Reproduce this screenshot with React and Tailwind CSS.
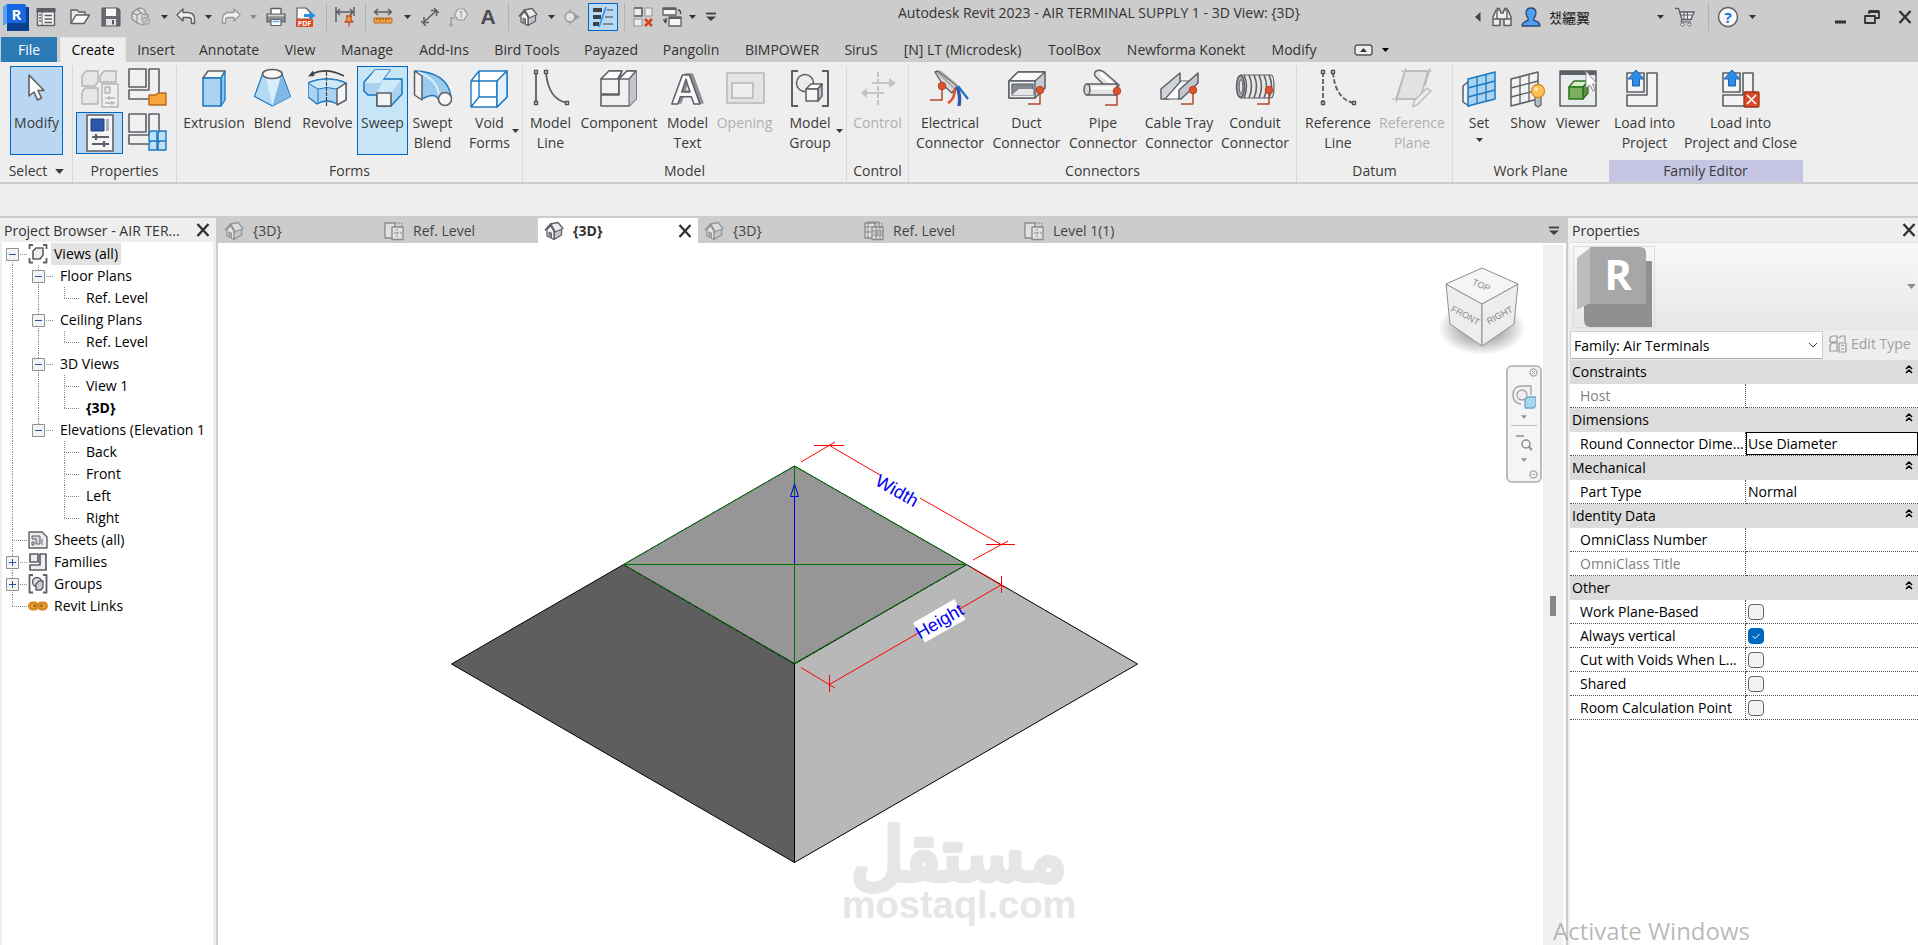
import React, { useState } from "react";
import clsx from "clsx";

const G = "#5c5f66";
const B = "#1a78c2";

const Svg = ({ w = 40, h = w, className, children }) => (
  <svg
    width={w}
    height={h}
    viewBox={`0 0 ${w} ${h}`}
    fill="none"
    strokeLinejoin="round"
    className={clsx("shrink-0", className)}
    aria-hidden="true"
  >
    {children}
  </svg>
);

const Caret = ({ className }) => (
  <svg width="7" height="4" viewBox="0 0 7 4" className={clsx("shrink-0", className)} aria-hidden="true">
    <path d="M0 0H7L3.5 4Z" fill="currentColor" />
  </svg>
);

const CloseIcon = () => (
  <Svg w={14}>
    <path d="M1.5 1L12.5 13M12.5 1L1.5 13" stroke="#333" strokeWidth="2.4" />
  </Svg>
);

/* ---------- quick access icons (20px) ---------- */

const RevitLogo = () => (
  <Svg w={28}>
    <path d="M5 4H27V28H5Z" fill="#0b3f8f" />
    <path d="M1 4L5 1V20L1 23Z" fill="#5aa0f5" />
    <path d="M5 1H22Q24 1 24 3V20H5Z" fill="#1667e0" />
    <text x="14.5" y="16.5" textAnchor="middle" fontSize="15" fontWeight="700" fontFamily="Open Sans, sans-serif" fill="#fff">
      R
    </text>
  </Svg>
);

const PropertiesPalette = () => (
  <Svg w={20}>
    <path d="M1.5 2H18.5V18.5H1.5Z" fill="#f4f4f4" stroke={G} strokeWidth="1.4" />
    <path d="M1 1.5H19V5H1ZM6 5V18" fill={G} stroke={G} />
    <path d="M3 8H5M3 11H5M3 14H5M8.5 8.5H16M8.5 12H16M8.5 15.5H16" stroke={G} strokeWidth="1.6" />
  </Svg>
);

const Open = () => (
  <Svg w={20}>
    <path d="M1 16V3H7L9 5H15V8" fill="#e8e8e8" stroke={G} strokeWidth="1.4" />
    <path d="M1 16.5L6 8H19.5L14 16.5Z" fill="#fafafa" stroke={G} strokeWidth="1.4" />
  </Svg>
);

const Save = () => (
  <Svg w={20}>
    <path d="M1 1H17L19 3V19H1Z" fill="#686b72" stroke="#54575c" />
    <path d="M5 1.5H15V9H5Z" fill="#f7f7f7" />
    <path d="M5 12H15V18.5H5Z" fill="#e4e4e4" />
    <path d="M11 13H13V17.5H11Z" fill="#54575c" />
  </Svg>
);

const Sync = () => (
  <Svg w={20}>
    <path d="M6 2L10 1L14 3V6L17 8V14L12 18L6 16L1 12V6Z" fill="#dcdcdc" stroke="#8f9195" strokeWidth="1.3" />
    <path d="M1 6L6 8L10 6L14 8L17 7M6 8V16M11 8V13M6 2L10 6" stroke="#8f9195" strokeWidth="1.2" />
    <circle cx="15" cy="14" r="4.5" fill="#aeb0b3" />
    <path d="M12.5 14L15 12M17.5 14L15 16" stroke="#eee" />
  </Svg>
);

const UndoArrow = ({ redo, color }) => (
  <Svg w={20}>
    <g transform={redo ? "translate(20 0) scale(-1 1)" : undefined}>
      <path
        d="M1 8L7 2V5.5H12Q18.500 6 18.500 12V16.500H15.500V13Q15.500 10.500 12 10.500H7V14Z"
        fill="#f1f1f1"
        stroke={color}
        strokeWidth="1.4"
      />
    </g>
  </Svg>
);

const Print = () => (
  <Svg w={20}>
    <path d="M5 7V1.500H15V7" fill="#fff" stroke={G} strokeWidth="1.4" />
    <path d="M1 7H19V15H1Z" fill="#8d9095" stroke={G} strokeWidth="1.2" />
    <path d="M2 8.500H18" stroke="#d8d8d8" strokeWidth="1.500" />
    <path d="M5 12.500H15V18.500H5Z" fill="#fff" stroke={G} strokeWidth="1.2" />
    <path d="M6.500 14.500H13.500" stroke="#5fa9e0" strokeWidth="1.400" />
  </Svg>
);

const Pdf = () => (
  <Svg w={20}>
    <path d="M1 1H10L14 5V12H1Z" fill="#fafafa" stroke={G} strokeWidth="1.2" />
    <path d="M8 7H14V4L19.500 8.500L14 13V10H8Z" fill="#2b8de3" />
    <path d="M0 12H17V20H0Z" fill="#dd4b22" />
    <text x="8.500" y="18.500" textAnchor="middle" fontSize="7" fontWeight="700" fontFamily="Open Sans, sans-serif" fill="#fff">
      PDF
    </text>
  </Svg>
);

const AlignPin = () => (
  <Svg w={20}>
    <path d="M1 0V15M19 0V9M2 5H18M5 2L2 5L5 8M15 2L18 5L15 8" stroke={G} strokeWidth="1.5" />
    <path d="M11 9H17M12 9V13L10 15H18L16 13V9M14 15V19.500" fill="#f4a04a" stroke="#b9552b" strokeWidth="1.300" />
  </Svg>
);

const Measure = () => (
  <Svg w={20}>
    <path d="M1.500 5H18.500M5 2L1.500 5L5 8M15 2L18.500 5L15 8" stroke={G} strokeWidth="1.600" />
    <path d="M1 11H19V16H1Z" fill="#f2a243" stroke="#b8702a" strokeWidth="1" />
    <path d="M4 11V13M7 11V14M10 11V13M13 11V14M16 11V13" stroke="#8a4f17" />
  </Svg>
);

const AlignedDimension = () => (
  <Svg w={20}>
    <path d="M4 15L16 4M4 10V15.500H9M11 3.500H16.500V9" stroke={G} strokeWidth="1.600" />
    <path d="M1 14L6 19M14 1L19 6" stroke={G} strokeWidth="1.300" />
  </Svg>
);

const Tag = () => (
  <Svg w={20}>
    <path d="M2 18V11H6" stroke="#96999d" strokeWidth="1.300" />
    <circle cx="2" cy="18" r="1.200" stroke="#96999d" />
    <path d="M9 2H15L18.500 7.500L15 13H9L5.500 7.500Z" fill="#e6e6e6" stroke="#96999d" strokeWidth="1.200" />
    <text x="12" y="11" textAnchor="middle" fontSize="9" fontFamily="Open Sans, sans-serif" fill="#85888c">
      1
    </text>
  </Svg>
);

const TextA = () => (
  <Svg w={20}>
    <text x="10" y="17" textAnchor="middle" fontSize="21" fontWeight="700" fontFamily="Liberation Sans, sans-serif" fill="#494c51">
      A
    </text>
  </Svg>
);

const House = ({ faded }) => (
  <Svg w={20} className={faded ? "opacity-50" : undefined}>
    <path d="M10 10L17.500 7V14L10 18.500Z" fill="#c3c6ca" stroke={G} strokeWidth="1.300" />
    <path d="M3 8.500L6.500 4.500L10 10V18.500L3 15Z" fill="#f7f7f7" stroke={G} strokeWidth="1.300" />
    <path d="M5 16V11L7.500 12V17" fill="#8f9297" stroke={G} />
    <path d="M6.500 3L14 1.500L19 7.500L11 11Z" fill="#ededed" stroke={G} strokeWidth="1.300" />
    <path d="M1 9.500L6.500 3L11 11" stroke={G} strokeWidth="1.600" />
  </Svg>
);

const Section = () => (
  <Svg w={16}>
    <path d="M8 3L16 8L8 13Z" fill="#9c9ea1" />
    <circle cx="6" cy="8" r="5" fill="#e2e2e2" stroke="#96999d" strokeWidth="1.400" />
    <path d="M6 0V3M6 13V16" stroke="#96999d" />
  </Svg>
);

const ThinLines = () => (
  <Svg w={24}>
    <path d="M2 5H11M2 12H10M2 19H8" stroke="#3c4048" strokeWidth="4" />
    <path d="M16 5H22M14 12H22M12 19H22" stroke="#3c4048" strokeWidth="1.200" />
    <path d="M15 2L8 22" stroke="#3b96ee" strokeWidth="1.800" />
  </Svg>
);

const CloseInactive = () => (
  <Svg w={20}>
    <path d="M1 1H9V9H1ZM12 1H19V9H12ZM1 12H9V19H1Z" fill="#ececec" stroke="#96999d" strokeWidth="1.200" />
    <path d="M1 1H9V9H1" stroke={G} strokeWidth="1.500" />
    <path d="M12 12L19 19M19 12L12 19" stroke="#d8431f" strokeWidth="2.600" />
  </Svg>
);

const SwitchWindows = () => (
  <Svg w={20}>
    <path d="M1 1H14V8H1ZM7 10H19V19H7Z" fill="#f6f6f6" stroke={G} strokeWidth="1.300" />
    <path d="M1 2H14M7 11H19" stroke={G} strokeWidth="2.200" />
    <path d="M16 3Q19 3 18.500 7M4 11V15M1.500 12.500L4 16" stroke="#3c4048" strokeWidth="1.400" />
  </Svg>
);

const Customize = () => (
  <Svg w={12}>
    <path d="M1 2.500H11" stroke="#3c4048" strokeWidth="1.800" />
    <path d="M1 5.500H11L6 10Z" fill="#3c4048" />
  </Svg>
);

const Binoculars = () => (
  <Svg w={20}>
    <path
      d="M1 10L4 3H8L9 6H11L12 3H16L19 10V18.500H12V12H8V18.500H1Z"
      fill="#ededed"
      stroke={G}
      strokeWidth="1.500"
    />
    <path d="M4.500 1.500H8M12 1.500H15.500M1 12H8M12 12H19M5 4V12M15 4V12" stroke={G} strokeWidth="1.400" />
  </Svg>
);

const UserIcon = () => (
  <Svg w={20}>
    <path d="M1 19Q1 15 7 13.500V11Q5 9 5 5.500Q5.500 1 10 1Q14.500 1 15 5.500Q15 9 13 11V13.500Q19 15 19 19Z" fill="#4f9df0" stroke="#2f4a73" strokeWidth="1.300" />
  </Svg>
);

const Cart = () => (
  <Svg w={20}>
    <path d="M0 1.500H3.500L7 12.500H16L19 5H5" fill="#f1f1f1" stroke={G} strokeWidth="1.400" />
    <path d="M6 8H18M9 5V12M12.500 5V12M7 12.500L6 15H16" stroke={G} strokeWidth="1.100" />
    <circle cx="7.500" cy="17.500" r="1.600" fill="#fff" stroke={G} />
    <circle cx="14.500" cy="17.500" r="1.600" fill="#fff" stroke={G} />
  </Svg>
);

const Help = () => (
  <Svg w={22}>
    <circle cx="11" cy="11" r="9.500" fill="#f7f7f7" stroke={G} strokeWidth="1.500" />
    <text x="11" y="16.500" textAnchor="middle" fontSize="15" fontWeight="700" fontFamily="Open Sans, sans-serif" fill="#1b74d1">
      ?
    </text>
  </Svg>
);

/* ---------- ribbon icons (40px) ---------- */

const Cursor = () => (
  <Svg>
    <path d="M12 7V28L17 24L20.500 32L24.500 30L21 22.500H27Z" fill="#fdfdfd" stroke={G} strokeWidth="1.600" />
  </Svg>
);

const Extrusion = () => (
  <Svg>
    <path d="M9 10L14 3H31L27 10Z" fill="#f6f6f6" stroke={G} strokeWidth="1.500" />
    <path d="M27 10L31 3V32L27 38Z" fill="#8fc3e8" stroke={B} strokeWidth="1.300" />
    <path d="M9 10H27V38H9Z" fill="#a9d3f0" stroke={B} strokeWidth="1.500" />
  </Svg>
);

const Blend = () => (
  <Svg>
    <path d="M9.500 6L1.500 28.500L19.500 38L37.500 28.500L29 6Z" fill="#b3daf3" stroke={B} strokeWidth="1.200" />
    <path d="M13 10L19.500 38L28 9Z" fill="#d9eefb" />
    <path d="M28 8L19.500 38L37.500 28.500Z" fill="#7fb8e2" />
    <ellipse cx="19.300" cy="6" rx="9.800" ry="4.500" fill="#f7f7f7" stroke={G} strokeWidth="1.600" />
  </Svg>
);

const Revolve = () => (
  <Svg>
    <path d="M0 15Q8 11 19 11Q30 11 38 15V32L29 36Q24 33 19 33Q14 33 9 36L0 29Z" fill="#a9d3f0" stroke={B} strokeWidth="1.300" />
    <path d="M0 15L10 21Q19 18 28 21L38 15Q19 7 0 15Z" fill="#cfe8f8" stroke={B} />
    <path d="M10 21V36" stroke={B} />
    <path d="M29 21L38 15V32L29 37Z" fill="#f6f6f6" stroke={G} strokeWidth="1.500" />
    <path d="M4 6Q18 -1 36 8" stroke="#3f4247" strokeWidth="1.800" />
    <path d="M0 8.500L5 2.500L6.500 8Z" fill="#3f4247" />
    <path d="M18.500 4V38" stroke="#3f4247" strokeWidth="1.200" strokeDasharray="4 1" />
  </Svg>
);

const Sweep = () => (
  <Svg>
    <path d="M12 2H27L20 11H39V26L28 38H14V27H5L1 23V14Z" fill="#a9d3f0" stroke={B} strokeWidth="1.500" />
    <path d="M12 2H27L17 15H2Z" fill="#d6edfa" />
    <path d="M20 12H38L28 25H14Z" fill="#cde8f9" />
    <path d="M14 25H28V38H14Z" fill="#f4f4f4" stroke={G} strokeWidth="1.600" />
  </Svg>
);

const SweptBlend = () => (
  <Svg>
    <path d="M2 3Q34 4 38 28L25 31Q22 24 9 31Z" fill="#9bcbec" stroke={B} strokeWidth="1.300" />
    <path d="M5 4Q26 12 26 29" stroke="#d6edfa" strokeWidth="2" />
    <path d="M1.500 3L9 8V32L1.500 27Z" fill="#f2f2f2" stroke={G} strokeWidth="1.500" />
    <circle cx="32" cy="31" r="6.500" fill="#f7f7f7" stroke={G} strokeWidth="1.500" />
  </Svg>
);

const VoidForms = () => (
  <Svg>
    <path d="M1 13H27V39H1ZM1 13L9 3H37L27 13M37 3V29L27 39M9 3V29M9 29H37M9 29L1 39" fill="#fff" stroke={B} strokeWidth="1.400" />
    <path d="M27 13L37 3V29L27 39Z" fill="#e2f1fb" stroke={B} strokeWidth="1.400" />
  </Svg>
);

const EndBoxes = ({ pts }) =>
  pts.map(([x, y]) => <rect key={`${x}-${y}`} x={x - 1.5} y={y - 1.5} width="3" height="3" fill="#eee" stroke="#4d5056" strokeWidth="1.400" />);

const ModelLine = ({ dashed }) => (
  <Svg>
    <path d="M5 4V35M15 4Q17 31 36 35" stroke={G} strokeWidth="1.800" strokeDasharray={dashed ? "5 2" : undefined} />
    <EndBoxes pts={[[5, 4], [5, 35], [15, 4], [36, 35]]} />
  </Svg>
);

const Component = () => (
  <Svg>
    <path d="M2 11L10 3H23L20 11V26H2Z" fill="#f2f2f2" stroke={G} strokeWidth="1.500" />
    <path d="M2 27H20V11L28 3H37V31L30 38H2Z" fill="#f0f0f0" stroke={G} strokeWidth="1.600" />
    <path d="M30 11L37 3V31L30 38Z" fill="#c2c5c9" />
    <path d="M20 11H30L37 3H28ZM2 11L10 3H23L19 10V11Z" fill="#fff" stroke={G} strokeWidth="1.300" />
    <path d="M30 11V38" stroke={G} />
  </Svg>
);

const ModelText = () => (
  <Svg className="drop-shadow-[3px_-1px_0_#8d9096]">
    <text
      x="18"
      y="36"
      textAnchor="middle"
      fontSize="42"
      fontWeight="700"
      fontFamily="Liberation Sans, sans-serif"
      fill="#fafafa"
      stroke={G}
      strokeWidth="1.500"
    >
      A
    </text>
  </Svg>
);

const Opening = () => (
  <Svg>
    <path d="M2 5H39V35H2Z" fill="#e4e4e4" stroke="#b7b7b7" strokeWidth="1.600" />
    <path d="M7 15H28V30H7Z" fill="#efefef" stroke="#b7b7b7" strokeWidth="1.600" />
  </Svg>
);

const ModelGroup = () => (
  <Svg>
    <path d="M8 3H2V38H8M32 3H38V38H32" stroke={G} strokeWidth="2" />
    <circle cx="15" cy="15" r="8.500" fill="#ececec" stroke={G} strokeWidth="1.500" />
    <path d="M16 21L21 16H32L28 21Z" fill="#fff" stroke={G} strokeWidth="1.500" />
    <path d="M28 21L32 16V28L28 33Z" fill="#c2c5c9" stroke={G} strokeWidth="1.500" />
    <path d="M16 21H28V33H16Z" fill="#f4f4f4" stroke={G} strokeWidth="1.500" />
  </Svg>
);

const Control = () => (
  <Svg>
    <path d="M20 4V38" stroke="#b7b7b7" strokeWidth="1.600" strokeDasharray="5 2" />
    <path d="M14 15H33M6 25H26" stroke="#c4c4c4" strokeWidth="2" />
    <path d="M31 10L38 15L31 20ZM9 20L3 25L9 30Z" fill="#c4c4c4" />
  </Svg>
);

const Lead = ({ x, y }) => (
  <>
    <path d={`M${x} ${y}V${y + 14}H${x - 12}`} stroke="#b04a2c" strokeWidth="1.500" />
    <circle cx={x} cy={y} r="3.800" fill="#e0532f" stroke="#a33a1b" strokeWidth=".8" />
  </>
);

const Electrical = () => (
  <Svg>
    <path d="M8 3L27 18L22 25L13 17L5 4Z" fill="#d8d8d8" stroke={G} strokeWidth="1.400" />
    <path d="M10 3L27 17M7 4L24 20" stroke="#9da0a5" strokeWidth="1.500" />
    <path d="M25 20Q25 31 18 35" stroke="#e0532f" strokeWidth="2.600" />
    <path d="M27 19Q31 28 29 38" stroke="#3457b1" strokeWidth="3.400" />
    <path d="M28 18L38 31" stroke="#1b74c8" strokeWidth="2.200" />
    <Lead x={12} y={18} />
  </Svg>
);

const Duct = () => (
  <Svg>
    <path d="M2 13L11 4H38V20L28 30H2Z" fill="#c9ccd0" stroke={G} strokeWidth="1.500" />
    <path d="M2 13L11 4H38L28 13Z" fill="#fbfbfb" stroke={G} strokeWidth="1.300" />
    <path d="M2 13H28V30H2Z" fill="#f2f2f2" stroke={G} strokeWidth="1.500" />
    <path d="M5 16H26V27H5Z" fill="#85898f" stroke={G} strokeWidth="1.200" />
    <path d="M5 27L12 21H26V27Z" fill="#e6e6e6" />
    <Lead x={33} y={22} />
  </Svg>
);

const Pipe = () => (
  <Svg>
    <path d="M13 3Q17 1 21 4L36 17L32 27L24 20L13 9Q10 6 13 3Z" fill="#e4e4e4" stroke={G} strokeWidth="1.500" />
    <path d="M17 5L34 20" stroke="#fff" strokeWidth="3" />
    <path d="M4 16H34V27H4Z" fill="#e4e4e4" stroke={G} strokeWidth="1.400" />
    <path d="M6 20H32" stroke="#fff" strokeWidth="3" />
    <ellipse cx="4" cy="21.500" rx="3" ry="5.500" fill="#d0d3d7" stroke={G} strokeWidth="1.500" />
    <Lead x={34} y={23} />
  </Svg>
);

const CableTray = () => (
  <Svg>
    <path d="M2 21L21 5V15L10 31H2Z" fill="#d0d3d7" stroke={G} strokeWidth="1.500" />
    <path d="M6 31L22 13H32L20 31Z" fill="#fafafa" stroke={G} strokeWidth="1.200" />
    <path d="M20 22L39 5V15L22 31H20Z" fill="#c3c6cb" stroke={G} strokeWidth="1.500" />
    <Lead x={34} y={22} />
  </Svg>
);

const Conduit = () => (
  <Svg>
    <path d="M5 7H36Q39 7 39 18Q39 30 36 30H5" fill="#e6e6e6" stroke={G} strokeWidth="1.200" />
    {[9, 14, 19, 24, 29, 34].map((x) => (
      <path key={x} d={`M${x} 7Q${x + 5} 18 ${x} 30`} stroke={G} strokeWidth="1.600" />
    ))}
    <ellipse cx="5.500" cy="18.500" rx="4" ry="11" fill="#a8abb0" stroke={G} strokeWidth="1.500" />
    <ellipse cx="6" cy="18.500" rx="1.800" ry="7" fill="#e6e6e6" stroke={G} />
    <Lead x={34} y={22} />
  </Svg>
);

const ReferencePlane = () => (
  <Svg>
    <path d="M13 3H36L28 31H4Z" fill="#e2e2e2" stroke="#b7b7b7" strokeWidth="1.400" />
    <path d="M9 3H40M14 0L4 34M0 31H25M38 0L33 18" stroke="#b7b7b7" strokeWidth="1.200" />
    <path d="M35 20L39 23L26 36L21 39L22 33Z" fill="#ececec" stroke="#b7b7b7" strokeWidth="1.400" />
  </Svg>
);

const SetPlane = () => (
  <Svg>
    <path d="M4 18L10 13V38L4 34Z" fill="#f2f2f2" stroke={G} strokeWidth="1.500" />
    <path d="M9 11L36 4V31L9 38Z" fill="#a9d3f0" stroke={B} strokeWidth="1.500" />
    <path d="M18 9V36M27 6V33M9 20L36 13M9 29L36 22" stroke={B} strokeWidth="1.300" />
  </Svg>
);

const ShowPlane = () => (
  <Svg>
    <path d="M3 11L30 4V31L3 38Z" fill="#f2f2f2" stroke={G} strokeWidth="1.500" />
    <path d="M12 9V36M21 6V33M3 20L30 13M3 29L30 22" stroke={G} strokeWidth="1.300" />
    <path d="M27 29H33V37L30 39L27 37Z" fill="#b8bbbf" stroke={G} strokeWidth="1.200" />
    <circle cx="30" cy="23" r="6.500" fill="#ffc053" stroke="#dc8a24" strokeWidth="1.300" />
    <circle cx="28" cy="21" r="2" fill="#ffe9be" />
  </Svg>
);

const Viewer = () => (
  <Svg>
    <path d="M2 3H38V38H2Z" fill="#e9ebed" stroke={G} strokeWidth="1.500" />
    <path d="M2 3H38V7H2Z" fill={G} />
    <path d="M11 19L16 13H30L25 19Z" fill="#d9ebcf" stroke="#357024" strokeWidth="1.300" />
    <path d="M25 19L30 13V25L25 31Z" fill="#5c8f45" stroke="#357024" strokeWidth="1.300" />
    <path d="M11 19H25V31H11Z" fill="#7fae62" stroke="#277a1b" strokeWidth="1.600" />
    <path d="M28 3V20L32 17L35 23L37 22L34.500 16H39Z" fill="#fff" stroke="#888b90" />
  </Svg>
);

const LoadProject = ({ close }) => (
  <Svg>
    <path d="M22 5H32V38H2V27H22Z" fill="#f4f4f4" stroke={G} strokeWidth="1.600" />
    <path d="M2 5H19V24H2Z" fill="#f4f4f4" stroke={G} strokeWidth="1.600" />
    <path d="M11 2L19 11H14.500V18H7.500V11H3Z" fill="#2f8de4" stroke="#1a62b8" />
    {close && (
      <>
        <rect x="23" y="24" width="15" height="15" rx="1" fill="#da4b25" stroke="#9d3216" strokeWidth="1.300" />
        <path d="M26 27L35 36M35 27L26 36" stroke="#fff" strokeWidth="1.600" />
      </>
    )}
  </Svg>
);

const FamilyTypes = () => (
  <Svg>
    <g fill="#e6e6e6" stroke="#b4b4b4" strokeWidth="1.400">
      <path d="M2 8L6 3H18V14L15 18H2ZM20 8L24 3H36V14H20ZM2 24L5 20H18V36H2Z" />
      <path d="M22 16H38V39H22Z" fill="#f0f0f0" />
      <path d="M25 19H30V25H25ZM25 30H35M25 35H35M29 28V32M32 33V37" />
    </g>
  </Svg>
);

const PropertiesBig = () => (
  <Svg>
    <path d="M7 2H33V38H7Z" fill="#f5f5f5" stroke={G} strokeWidth="1.600" />
    <path d="M11 6H24V18H11Z" fill="#2f57a8" stroke="#1d3f85" />
    <path d="M26 6H29V18H26Z" fill="#aeb1b5" />
    <path d="M12 24H29M12 31H29" stroke={G} strokeWidth="1.800" />
    <path d="M16 21V27M24 28V34" stroke={G} strokeWidth="2.200" />
  </Svg>
);

const FamilyBlocks = ({ folder }) => (
  <Svg>
    <path d="M2 1H19V19H2ZM22 1H32V31H2V22H22Z" fill="#f0f0f0" stroke={G} strokeWidth="1.600" />
    {folder ? (
      <path d="M22 27H29L31 25H39V37H22Z" fill="#f7a63f" stroke="#b76a1e" strokeWidth="1.400" />
    ) : (
      <path d="M22 20L24 18H30V28H22ZM31 20L33 18H39V28H31ZM22 30L24 28H30V37H22ZM31 30L33 28H39V37H31Z" fill="#bfe0f5" stroke={B} strokeWidth="1.400" />
    )}
  </Svg>
);

/* ---------- title bar ---------- */

const QUICK_ACCESS = [
  { label: "Revit", icon: <RevitLogo />, w: "w-8" },
  { label: "Palette", icon: <PropertiesPalette />, w: "w-7 mr-1" },
  { label: "Open", icon: <Open />, w: "w-8" },
  { label: "Save", icon: <Save />, w: "w-[30px]" },
  { label: "Sync", icon: <Sync />, w: "w-[30px]" },
  { label: "Sync menu", icon: <Caret />, w: "w-4" },
  { label: "Undo", icon: <UndoArrow color={G} />, w: "w-7" },
  { label: "Undo menu", icon: <Caret />, w: "w-4" },
  { label: "Redo", icon: <UndoArrow redo color="#96999d" />, w: "w-[30px]" },
  { label: "Redo menu", icon: <Caret className="text-[#8a8a8a]" />, w: "w-[14px]" },
  { label: "Print", icon: <Print />, w: "w-8" },
  { label: "Export PDF", icon: <Pdf />, w: "w-7" },
  { sep: true, w: "w-3" },
  { label: "Pin dimension", icon: <AlignPin />, w: "w-[26px]" },
  { sep: true, w: "w-[14px]" },
  { label: "Measure", icon: <Measure />, w: "w-[22px]" },
  { label: "Measure menu", icon: <Caret />, w: "w-[26px]" },
  { label: "Aligned dimension", icon: <AlignedDimension />, w: "w-5" },
  { label: "Tag", icon: <Tag />, w: "w-[38px]" },
  { label: "Text", icon: <TextA />, w: "w-5" },
  { sep: true, w: "w-5" },
  { label: "Default 3D view", icon: <House />, w: "w-5" },
  { label: "3D view menu", icon: <Caret />, w: "w-[26px]" },
  { label: "Section", icon: <Section />, w: "w-4" },
  { label: "Thin lines", icon: <ThinLines />, w: "w-[30px] ml-2 border border-[#0067c0] bg-[#b9d9f3]" },
  { sep: true, w: "w-3" },
  { label: "Close inactive views", icon: <CloseInactive />, w: "w-[26px]" },
  { label: "Switch windows", icon: <SwitchWindows />, w: "w-8" },
  { label: "Windows menu", icon: <Caret />, w: "w-2" },
  { label: "Customize", icon: <Customize />, w: "w-[30px]" },
];

const BarItem = ({ item }) =>
  item.sep ? (
    <div className={clsx("flex justify-center shrink-0", item.w)}>
      <div className="w-px h-7 bg-[#b3b3b3]" />
    </div>
  ) : (
    <button type="button" aria-label={item.label} className={clsx("flex h-7 items-center justify-center shrink-0", item.w)}>
      {item.icon}
    </button>
  );

const TitleBar = () => (
  <header className="flex items-center h-[37px] pb-1 bg-[#ccc] text-[#333]">
    <div className="flex items-center">
      {QUICK_ACCESS.map((item, i) => (
        <BarItem key={i} item={item} />
      ))}
    </div>
    <h1 className="flex-1 pb-2 text-center text-sm whitespace-nowrap">
      Autodesk Revit 2023 - AIR TERMINAL SUPPLY 1 - 3D View: {"{3D}"}
    </h1>
    <div className="flex items-center w-[446px] shrink-0">
      <button type="button" aria-label="Collapse search" className="w-3 flex justify-center">
        <Svg w={6} h={10}>
          <path d="M5.500 0V10L0 5Z" fill="#444" />
        </Svg>
      </button>
      <BarItem item={{ label: "Search", icon: <Binoculars />, w: "w-9" }} />
      <button type="button" className="flex items-center gap-2 ml-px text-[#222]">
        <UserIcon />
        <span className="w-[115px] text-left text-sm font-['Noto_Sans_CJK_KR',sans-serif]">챘纚翼</span>
      </button>
      <div className="flex items-center">
        <BarItem item={{ label: "Account menu", icon: <Caret />, w: "w-2 -ml-2" }} />
        <BarItem item={{ label: "App store", icon: <Cart />, w: "w-[42px]" }} />
        <BarItem item={{ sep: true, w: "w-1" }} />
        <BarItem item={{ label: "Help", icon: <Help />, w: "w-9" }} />
        <BarItem item={{ label: "Help menu", icon: <Caret />, w: "w-3" }} />
      </div>
      <div className="flex flex-1 items-center justify-end gap-2">
        <button type="button" aria-label="Minimize" className="px-1">
          <Svg w={14}>
            <path d="M1 12H12" stroke="#333" strokeWidth="3" />
          </Svg>
        </button>
        <button type="button" aria-label="Restore" className="px-1">
          <Svg w={16} h={14}>
            <path d="M5 4V1.500H15V8H11" stroke="#333" strokeWidth="1.800" />
            <path d="M5 1.500H15" stroke="#333" strokeWidth="3" />
            <path d="M1 6H11V13H1Z" stroke="#333" strokeWidth="1.800" />
          </Svg>
        </button>
        <button type="button" aria-label="Close" className="px-[6px]">
          <CloseIcon />
        </button>
      </div>
    </div>
  </header>
);

/* ---------- ribbon ---------- */

const RIBBON_TABS = [
  ["Insert", "w-[60px]"],
  ["Annotate", "w-[86px]"],
  ["View", "w-[56px]"],
  ["Manage", "w-[78px]"],
  ["Add-Ins", "w-[76px]"],
  ["Bird Tools", "w-[90px]"],
  ["Payazed", "w-[78px]"],
  ["Pangolin", "w-[82px]"],
  ["BIMPOWER", "w-[100px]"],
  ["SiruS", "w-[58px]"],
  ["[N] LT (Microdesk)", "w-[145px]"],
  ["ToolBox", "w-[79px]"],
  ["Newforma Konekt", "w-[144px]"],
  ["Modify", "w-[72px]"],
];

const RibbonTabs = () => (
  <nav className="flex items-center h-[25px] pl-px bg-[#ccc] text-sm text-[#333]">
    <button type="button" className="w-14 h-full bg-[#2b7ab5] text-white">
      File
    </button>
    <button type="button" className="w-[66px] h-full ml-[3px] border border-b-0 border-[#e4e4e4] bg-[#eee] text-black">
      Create
    </button>
    {RIBBON_TABS.map(([name, w]) => (
      <button type="button" key={name} className={clsx("h-full whitespace-nowrap", w)}>
        {name}
      </button>
    ))}
    <button type="button" aria-label="Minimize ribbon" className="flex items-center gap-2 ml-6">
      <Svg w={20} h={12}>
        <rect x="1" y="1" width="17" height="10" rx="2.500" fill="#eee" stroke="#555" strokeWidth="1.400" />
        <path d="M6 8L9.500 4L13 8Z" fill="#333" />
      </Svg>
      <Caret className="text-black" />
    </button>
  </nav>
);

const RibbonButton = ({ label, icon, w, disabled, menu, below, active }) => (
  <button
    type="button"
    disabled={disabled}
    className={clsx(
      "relative flex flex-col items-center h-[89px] border whitespace-nowrap leading-5",
      w,
      active || "border-transparent",
      disabled && "text-[#b0b0b0]"
    )}
  >
    <span className="pt-px pb-[5px]">{icon}</span>
    {label.split("|").map((line) => (
      <span key={line}>{line}</span>
    ))}
    {menu && <Caret className="absolute right-[2px] bottom-[21px]" />}
    {below && <Caret className="mt-[5px]" />}
  </button>
);

const PANELS = [
  {
    title: "Forms",
    w: "w-[346px] pl-1",
    tools: [
      { label: "Extrusion", icon: <Extrusion />, w: "w-[66px]" },
      { label: "Blend", icon: <Blend />, w: "w-[51px]" },
      { label: "Revolve", icon: <Revolve />, w: "w-[59px]" },
      { label: "Sweep", icon: <Sweep />, w: "w-[51px]", active: "border-[#0067c0] bg-[#c6e6f8]" },
      { label: "Swept|Blend", icon: <SweptBlend />, w: "w-[49px]" },
      { label: "Void|Forms", icon: <VoidForms />, w: "w-[65px]", menu: true },
    ],
  },
  {
    title: "Model",
    w: "w-[324px]",
    tools: [
      { label: "Model|Line", icon: <ModelLine />, w: "w-[55px]" },
      { label: "Component", icon: <Component />, w: "w-[82px]" },
      { label: "Model|Text", icon: <ModelText />, w: "w-[55px]" },
      { label: "Opening", icon: <Opening />, w: "w-[59px]", disabled: true },
      { label: "Model|Group", icon: <ModelGroup />, w: "w-[72px]", menu: true },
    ],
  },
  {
    title: "Control",
    w: "w-[62px]",
    tools: [{ label: "Control", icon: <Control />, w: "w-[61px]", disabled: true }],
  },
  {
    title: "Connectors",
    w: "w-[388px] pl-[3px]",
    tools: [
      { label: "Electrical|Connector", icon: <Electrical />, w: "w-[76px]" },
      { label: "Duct|Connector", icon: <Duct />, w: "w-[77px]" },
      { label: "Pipe|Connector", icon: <Pipe />, w: "w-[76px]" },
      { label: "Cable Tray|Connector", icon: <CableTray />, w: "w-[76px]" },
      { label: "Conduit|Connector", icon: <Conduit />, w: "w-[76px]" },
    ],
  },
  {
    title: "Datum",
    w: "w-[156px] pl-1",
    tools: [
      { label: "Reference|Line", icon: <ModelLine dashed />, w: "w-[74px]" },
      { label: "Reference|Plane", icon: <ReferencePlane />, w: "w-[74px]", disabled: true },
    ],
  },
  {
    title: "Work Plane",
    w: "w-[156px] border-r-0",
    tools: [
      { label: "Set", icon: <SetPlane />, w: "w-[52px]", below: true },
      { label: "Show", icon: <ShowPlane />, w: "w-[46px]" },
      { label: "Viewer", icon: <Viewer />, w: "w-[54px]" },
    ],
  },
  {
    title: "Family Editor",
    w: "w-[194px] border-r-0",
    highlight: true,
    tools: [
      { label: "Load into|Project", icon: <LoadProject />, w: "w-[71px]" },
      { label: "Load into|Project and Close", icon: <LoadProject close />, w: "w-[121px]" },
    ],
  },
];

const Panel = ({ title, w, highlight, titleExtra, children }) => (
  <section className="flex flex-col pt-1">
    <div className={clsx("flex flex-1 border-r border-[#d9d9d9]", w)}>{children}</div>
    <div
      className={clsx(
        "flex h-[22px] items-center justify-center gap-2 border-r",
        highlight ? "border-[#c6c6e4] bg-[#c6c6e4]" : title === "Work Plane" ? "border-transparent" : "border-[#d9d9d9]"
      )}
    >
      {title}
      {titleExtra}
    </div>
  </section>
);

const Ribbon = () => (
  <div className="flex h-[122px] pl-px border-b-2 border-[#ccc] bg-[#eee] text-sm text-[#3a3a3a]">
    <Panel title="Select" w="w-[72px] pl-[9px]" titleExtra={<Caret className="w-[9px] h-[5px]" />}>
      <RibbonButton label="Modify" icon={<Cursor />} w="w-[53px]" active="border-[#0067c0] bg-[#b9d7f2]" />
    </Panel>
    <Panel title="Properties" w="w-[104px]">
      <div className="grid grid-cols-2 h-[89px] pl-[3px]">
        <button type="button" aria-label="Family category" disabled className="flex w-[47px] h-[44px] items-center justify-center">
          <FamilyTypes />
        </button>
        <button type="button" aria-label="Family types" className="flex w-[47px] h-[44px] items-center justify-center">
          <FamilyBlocks folder />
        </button>
        <button
          type="button"
          aria-label="Properties palette"
          className="flex w-[47px] h-[42px] mt-px items-center justify-center border border-[#0067c0] bg-[#b9d7f2]"
        >
          <PropertiesBig />
        </button>
        <button type="button" aria-label="Type properties" className="flex w-[47px] h-[44px] items-center justify-center">
          <FamilyBlocks />
        </button>
      </div>
    </Panel>
    {PANELS.map((panel) => (
      <Panel key={panel.title} title={panel.title} w={panel.w} highlight={panel.highlight}>
        {panel.tools.map((tool) => (
          <RibbonButton key={tool.label} {...tool} />
        ))}
      </Panel>
    ))}
  </div>
);

/* ---------- project browser ---------- */

const ViewsIcon = () => (
  <Svg w={20}>
    <path d="M5 1H1.500V5M15 1H18.500V5M1.500 14V18.500H5M18.500 14V18.500H15" stroke={G} strokeWidth="1.800" />
    <path d="M5 7L8 4H15V11L12 15H5Z" fill="#eee" stroke={G} strokeWidth="1.600" />
  </Svg>
);
const SheetsIcon = () => (
  <Svg w={20}>
    <path d="M1 2H14L19 7V18H1Z" fill="#eee" stroke={G} strokeWidth="1.400" />
    <path d="M4 6H12V14H8V9H4ZM14 9V15M4 12H6V15H4Z" fill="#d5d7da" stroke={G} />
  </Svg>
);
const FamiliesIcon = () => (
  <Svg w={20}>
    <path d="M2 2H10V10H2ZM2 13H12V2H18V18H2Z" fill="#eee" stroke={G} strokeWidth="1.700" />
  </Svg>
);
const GroupsIcon = () => (
  <Svg w={20}>
    <path d="M5 1H1.500V18.500H5M15 1H18.500V18.500H15" stroke={G} strokeWidth="1.800" />
    <circle cx="9" cy="8" r="4.500" fill="#ddd" stroke={G} strokeWidth="1.400" />
    <path d="M8 10L11 7H15V13L13 16H8Z" fill="#ccc" stroke={G} strokeWidth="1.400" />
  </Svg>
);
const LinksIcon = () => (
  <Svg w={20}>
    <rect x="1.500" y="7" width="8" height="6" rx="3" fill="#e9b25f" stroke="#d98a1f" strokeWidth="3" />
    <rect x="10.500" y="7" width="8" height="6" rx="3" fill="#e9b25f" stroke="#d98a1f" strokeWidth="3" />
    <path d="M5 10H8M12 10H15" stroke="#8f520c" strokeWidth="1.500" />
  </Svg>
);

// u = up, d = down, r = right, + and - = expander box
const TREE = [
  { guides: ["dr-"], icon: <ViewsIcon />, label: "Views (all)", selected: true },
  { guides: ["ud", "udr-"], label: "Floor Plans" },
  { guides: ["ud", "ud", "ur"], label: "Ref. Level" },
  { guides: ["ud", "udr-"], label: "Ceiling Plans" },
  { guides: ["ud", "ud", "ur"], label: "Ref. Level" },
  { guides: ["ud", "udr-"], label: "3D Views" },
  { guides: ["ud", "ud", "udr"], label: "View 1" },
  { guides: ["ud", "ud", "ur"], label: "{3D}", bold: true },
  { guides: ["ud", "ur-"], label: "Elevations (Elevation 1" },
  { guides: ["ud", "", "udr"], label: "Back" },
  { guides: ["ud", "", "udr"], label: "Front" },
  { guides: ["ud", "", "udr"], label: "Left" },
  { guides: ["ud", "", "ur"], label: "Right" },
  { guides: ["udr"], icon: <SheetsIcon />, label: "Sheets (all)" },
  { guides: ["udr+"], icon: <FamiliesIcon />, label: "Families" },
  { guides: ["udr+"], icon: <GroupsIcon />, label: "Groups" },
  { guides: ["ur"], icon: <LinksIcon />, label: "Revit Links" },
];

const Guide = ({ kind }) => (
  <Svg w={26} h={22}>
    <g stroke="#8a8a8a" strokeDasharray="1 1">
      {kind.includes("u") && <path d="M10.500 0V11" />}
      {kind.includes("d") && <path d="M10.500 11V22" />}
      {kind.includes("r") && <path d="M10 11.500H27" />}
    </g>
    {/[+-]/.test(kind) && (
      <>
        <rect x="4.500" y="5.500" width="12" height="12" fill="#f3f3f3" stroke="#919191" />
        <path d="M7 11.500H14" stroke="#2c50a8" />
        {kind.includes("+") && <path d="M10.500 8V15" stroke="#2c50a8" />}
      </>
    )}
  </Svg>
);

const ProjectBrowser = () => (
  <aside className="flex flex-col w-[218px] shrink-0 border-r-2 border-[#ccc] bg-[#eee]">
    <div className="flex items-center justify-between h-6 pl-1 pr-[6px] text-[#333]">
      <h2 className="pt-[2px] whitespace-nowrap">Project Browser - AIR TER...</h2>
      <button type="button" aria-label="Close Project Browser">
        <CloseIcon />
      </button>
    </div>
    <ul className="flex-1 ml-[2px] mr-[3px] pt-px bg-white text-black overflow-hidden">
      {TREE.map((row, i) => (
        <li key={i} className="flex items-center h-[22px] whitespace-nowrap">
          {row.guides.map((kind, j) => (
            <Guide key={j} kind={kind} />
          ))}
          {row.icon && <span className="w-[23px]">{row.icon}</span>}
          <span
            className={clsx(
              "leading-[22px]",
              row.icon ? "px-[3px]" : "pl-[6px]",
              row.selected && "bg-[#e3e3e3]",
              row.bold && "font-bold"
            )}
          >
            {row.label}
          </span>
        </li>
      ))}
    </ul>
  </aside>
);

/* ---------- view area ---------- */

const PlanIcon = ({ double }) => (
  <Svg w={20} className="opacity-60">
    <path d="M1 2H11V17H1Z" fill="#eee" stroke={G} strokeWidth="1.300" />
    <path d="M8 6H19V18.500H8Z" fill="#eee" stroke={G} strokeWidth="1.300" />
    <path d="M11 2H18V6M10 12H18M13 8V17" stroke={G} strokeDasharray="2 1" />
    {double && <path d="M4 1H15V6M4 1V17M1 6H8M1 11H8M8 10H19M8 14H19M12 6V18M16 6V18" stroke={G} />}
  </Svg>
);

const VIEW_TABS = [
  { label: "{3D}", icon: <House faded /> },
  { label: "Ref. Level", icon: <PlanIcon /> },
  { label: "{3D}", icon: <House />, active: true },
  { label: "{3D}", icon: <House faded /> },
  { label: "Ref. Level", icon: <PlanIcon double /> },
  { label: "Level 1(1)", icon: <PlanIcon /> },
];

const ViewTabs = () => (
  <div className="flex items-center h-[25px] bg-[#ccc] text-[#444]">
    {VIEW_TABS.map((tab, i) => (
      <div key={i} className={clsx("flex items-center w-40 h-full px-[6px]", tab.active && "bg-white font-bold text-[#333]")}>
        <button type="button" className="flex flex-1 items-center gap-[9px] text-left">
          {tab.icon}
          {tab.label}
        </button>
        {tab.active && (
          <button type="button" aria-label="Close view">
            <CloseIcon />
          </button>
        )}
      </div>
    ))}
    <button type="button" aria-label="View list" className="ml-auto mr-[6px]">
      <Customize />
    </button>
  </div>
);

const Drawing = () => (
  <svg className="absolute inset-0 w-full h-full" viewBox="218 243 1325 702" fill="none" aria-label="Family model">
    <defs>
      <radialGradient id="cubeShadow">
        <stop offset="0.5" stopColor="#888" stopOpacity="0.6" />
        <stop offset="1" stopColor="#888" stopOpacity="0" />
      </radialGradient>
    </defs>
    <g stroke="#000">
      <path d="M623.500 564.500L451.500 664L794.500 862.500V664Z" fill="#5e5e5e" />
      <path d="M966.500 564.500L1137.500 664L794.500 862.500V664Z" fill="#b8b8b8" />
    </g>
    <path d="M794.500 466L966.500 564.500L794.500 663.500L623.500 564.500Z" fill="#969696" stroke="#0a2c0a" />
    <path d="M794.500 466L966.500 564.500L794.500 663.500L623.500 564.500Z" stroke="#008000" strokeDasharray="5 3" />
    <path d="M623.500 564.500H966.500M794.500 466V663.500" stroke="#007000" />
    <path d="M794.500 564V497M794.500 484L798.500 496.500H790.500Z" stroke="#0000f0" />
    <g stroke="#f00">
      <path d="M829.500 445.500L880 475M920 498L1001 544.500M801 462L835 442M973 560L1008 541M814 445.500H844M986 544.500H1015" />
      <path d="M1001 585L829.500 684.500M972 568L1006 588M801 667.500L835 688M1001.500 576V593M829.500 675V692" />
    </g>
    <path d="M954.500 599L965.500 619.500L925 642.500L913 623Z" fill="#fff" />
    <g fontFamily="Liberation Sans, Arial, sans-serif" fontSize="18" fill="#0000f0" textAnchor="middle">
      <text transform="translate(894 496) rotate(30)">Width</text>
      <text transform="translate(942.500 626.500) rotate(-30)">Height</text>
    </g>

    <g fill="#e6e6e6" textAnchor="middle">
      <text
        x="959"
        y="880"
        fontFamily="DejaVu Sans, sans-serif"
        fontSize="72"
        stroke="#e6e6e6"
        strokeWidth="6"
        strokeLinejoin="round"
      >
        مستقل
      </text>
      <text x="959" y="918" fontFamily="Liberation Sans, sans-serif" fontWeight="700" fontSize="38">
        mostaql.com
      </text>
    </g>

    <ellipse cx="1482" cy="328" rx="44" ry="27" fill="url(#cubeShadow)" />
    <g stroke="#8f8f8f">
      <path d="M1446 284L1482 304V346L1450 324Z" fill="#ededed" />
      <path d="M1518 284L1482 304V346L1514 324Z" fill="#ededed" />
      <path d="M1482 268L1518 284L1482 304L1446 284Z" fill="#f5f5f5" />
    </g>
    <g fontFamily="Liberation Sans, sans-serif" fontSize="9" fill="#8a8a8a" textAnchor="middle">
      <text transform="translate(1480 288) rotate(24)">TOP</text>
      <text transform="translate(1464 318) rotate(28)">FRONT</text>
      <text transform="translate(1501 318) rotate(-28)">RIGHT</text>
    </g>
  </svg>
);

const NavigationBar = () => (
  <div className="absolute top-[122px] right-[1px] flex flex-col items-center w-9 h-[118px] border-2 border-[#bdbdbd] rounded-md bg-[#f5f5f5] text-[#8f8f8f]">
    <button type="button" aria-label="Close navigation bar" className="self-end pr-[2px] pt-[1px]">
      <Svg w={9}>
        <circle cx="4.500" cy="4.500" r="3.500" stroke="#b0b0b0" strokeWidth="1.600" />
        <path d="M3 3L6 6M6 3L3 6" stroke="#b0b0b0" />
      </Svg>
    </button>
    <button type="button" aria-label="Steering wheel" className="mt-2">
      <Svg w={24}>
        <path d="M19 10V1H10Q1 1 1 10Q1 18 9 19" fill="#f0f0f0" stroke="#a5a5a5" strokeWidth="1.400" />
        <circle cx="10" cy="10" r="5" stroke="#a5a5a5" strokeWidth="1.300" />
        <path d="M13 14L16 12H24V20L22 23H13Z" fill="#a9d6ee" stroke="#6ea9cb" strokeWidth="1.300" />
      </Svg>
    </button>
    <button type="button" aria-label="Steering wheel menu" className="flex h-4 items-center">
      <Caret className="w-[6px]" />
    </button>
    <div className="w-[26px] h-px shrink-0 bg-[#bdbdbd]" />
    <button type="button" aria-label="Zoom" className="mt-2">
      <Svg w={20} h={18}>
        <path d="M2 2H10" stroke="#8f8f8f" strokeWidth="1.500" />
        <circle cx="12" cy="10" r="4" stroke="#8f8f8f" strokeWidth="1.500" />
        <path d="M14.500 12.500L18 16" stroke="#8f8f8f" strokeWidth="2" />
      </Svg>
    </button>
    <button type="button" aria-label="Zoom menu" className="flex h-4 items-center">
      <Caret className="w-[6px]" />
    </button>
    <button type="button" aria-label="Navigation options" className="self-end mt-auto pr-[2px] pb-[2px]">
      <Svg w={9}>
        <circle cx="4.500" cy="4.500" r="3.500" stroke="#b0b0b0" strokeWidth="1.600" />
        <path d="M3 4.500H6" stroke="#b0b0b0" />
      </Svg>
    </button>
  </div>
);

const ViewArea = () => (
  <main className="flex flex-col flex-1 min-w-0 bg-white">
    <ViewTabs />
    <div className="flex flex-1">
      <div className="relative flex-1">
        <Drawing />
        <NavigationBar />
      </div>
      <div className="flex items-center justify-center w-5 mt-[2px] mr-[3px] bg-[#f0f0f0]">
        <div className="w-[6px] h-5 mb-[-22px] bg-[#84868b]" />
      </div>
    </div>
  </main>
);

/* ---------- properties ---------- */

const GROUPS = [
  { name: "Constraints", rows: [{ label: "Host", value: "", disabled: true }] },
  { name: "Dimensions", rows: [{ label: "Round Connector Dime...", value: "Use Diameter", focus: true }] },
  { name: "Mechanical", rows: [{ label: "Part Type", value: "Normal" }] },
  {
    name: "Identity Data",
    rows: [
      { label: "OmniClass Number", value: "" },
      { label: "OmniClass Title", value: "", disabled: true },
    ],
  },
  {
    name: "Other",
    rows: [
      { label: "Work Plane-Based", check: true },
      { label: "Always vertical", check: true },
      { label: "Cut with Voids When L...", check: true },
      { label: "Shared", check: true },
      { label: "Room Calculation Point", check: true },
    ],
  },
];

const toId = (label) => "prop-" + label.toLowerCase().replace(/[^a-z]+/g, "-");

const CheckBox = ({ id, checked, onChange }) => (
  <span className="relative flex w-4 h-4 ml-[2px]">
    <input
      id={id}
      type="checkbox"
      checked={checked}
      onChange={onChange}
      className="peer w-4 h-4 appearance-none border border-[#666] rounded-[4px] bg-[#f3f3f3] checked:border-[#0067c0] checked:bg-[#0067c0]"
    />
    <Svg w={16} className="absolute inset-0 hidden pointer-events-none peer-checked:block">
      <path d="M4.500 8L7 10.500L11.500 6" stroke="#fff" />
    </Svg>
  </span>
);

const PropertiesTable = () => {
  const [checks, setChecks] = useState({ "Always vertical": true });
  const toggle = (label) => setChecks((prev) => ({ ...prev, [label]: !prev[label] }));

  return (
    <table className="w-full table-fixed border-separate border-spacing-0 text-black">
      <colgroup>
        <col className="w-[176px]" />
        <col />
      </colgroup>
      {GROUPS.map((group) => (
        <tbody key={group.name}>
          <tr className="bg-[#dcdcdc]">
            <th colSpan={2} scope="rowgroup" className="h-6 p-0 font-normal">
              <button type="button" className="flex w-full h-6 items-center justify-between pl-[2px] pr-[5px]">
                {group.name}
                <Svg w={8} h={10} className="mb-[6px]">
                  <path d="M1 5L4 2L7 5M1 9L4 6L7 9" stroke="#000" strokeWidth="1.500" />
                </Svg>
              </button>
            </th>
          </tr>
          {group.rows.map((row) => (
            <tr key={row.label}>
              <th
                scope="row"
                className={clsx(
                  "h-6 p-0 pl-[10px] border-r border-b border-dotted border-[#555] text-left font-normal whitespace-nowrap",
                  row.disabled && "text-[#808080]"
                )}
              >
                <label htmlFor={toId(row.label)} className="block leading-[22px]">
                  {row.label}
                </label>
              </th>
              <td className="h-6 p-0 border-b border-dotted border-[#555]">
                {row.check ? (
                  <CheckBox id={toId(row.label)} checked={!!checks[row.label]} onChange={() => toggle(row.label)} />
                ) : (
                  <input
                    id={toId(row.label)}
                    type="text"
                    defaultValue={row.value}
                    disabled={row.disabled}
                    className={clsx(
                      "block w-full h-[23px] border px-px bg-transparent outline-none",
                      row.focus ? "border-black" : "border-transparent"
                    )}
                  />
                )}
              </td>
            </tr>
          ))}
        </tbody>
      ))}
    </table>
  );
};

const Properties = () => (
  <aside className="flex flex-col w-[352px] shrink-0 border-l-2 border-[#ccc] pl-[2px] bg-[#eee]">
    <div className="flex items-center justify-between h-6 px-[2px] text-[#333]">
      <h2 className="pt-[2px]">Properties</h2>
      <button type="button" aria-label="Close Properties">
        <CloseIcon />
      </button>
    </div>
    <button
      type="button"
      aria-label="Type selector"
      className="flex items-center justify-between h-[88px] pl-[3px] pr-[2px] border-t border-[#e0e0e0] bg-linear-to-b from-[#f8f8f8] to-[#e6e7e7]"
    >
      <span className="border border-[#dcdcdc]">
        <Svg w={80}>
          <path d="M10 14H78V80H16Q10 80 10 72Z" fill="#8f9092" />
          <path d="M3 11L16 1V56L3 63Z" fill="#bcbebe" />
          <path d="M16 0H66Q72 0 72 6V57H16Z" fill="#a5a7a8" />
          <text x="44" y="43" textAnchor="middle" fontSize="42" fontWeight="700" fontFamily="Open Sans, sans-serif" fill="#fff">
            R
          </text>
        </Svg>
      </span>
      <Caret className="w-[9px] h-[5px] text-[#8f8f8f]" />
    </button>
    <div className="flex items-center h-[30px] text-black">
      <div className="relative w-[253px]">
        <select
          aria-label="Family"
          className="w-full h-[28px] pl-[3px] pt-px appearance-none border border-[#ccc] border-b-[#aaa] bg-white"
        >
          <option>Family: Air Terminals</option>
        </select>
        <Svg w={10} h={6} className="absolute right-[5px] top-[11px] pointer-events-none">
          <path d="M1 1L5 5L9 1" stroke="#444" />
        </Svg>
      </div>
      <button type="button" disabled className="flex items-center gap-1 pl-[6px] pb-[2px] text-[#a0a0a0]">
        <Svg w={18}>
          <path d="M1 3L3 1H8V7H1ZM10 3L12 1H16V7M1 10L3 8H8V16H1ZM10 8H17V17H10ZM12 10.500H15M12 14H15" stroke="#999" strokeWidth="1.200" />
        </Svg>
        Edit Type
      </button>
    </div>
    <div className="flex-1 bg-white">
      <PropertiesTable />
    </div>
  </aside>
);

const App = () => (
  <div className="relative flex flex-col min-h-screen overflow-hidden bg-[#eee] font-['Open_Sans','Noto_Sans',sans-serif] text-sm select-none">
    <TitleBar />
    <RibbonTabs />
    <Ribbon />
    <div className="h-8" />
    <div className="flex flex-1 border-t-2 border-[#ccc]">
      <ProjectBrowser />
      <ViewArea />
      <Properties />
    </div>
    <div className="absolute right-[168px] bottom-0 text-[24px] leading-7 text-[#8a8a8a]/60 pointer-events-none whitespace-nowrap">
      Activate Windows
    </div>
  </div>
);

export default App;
